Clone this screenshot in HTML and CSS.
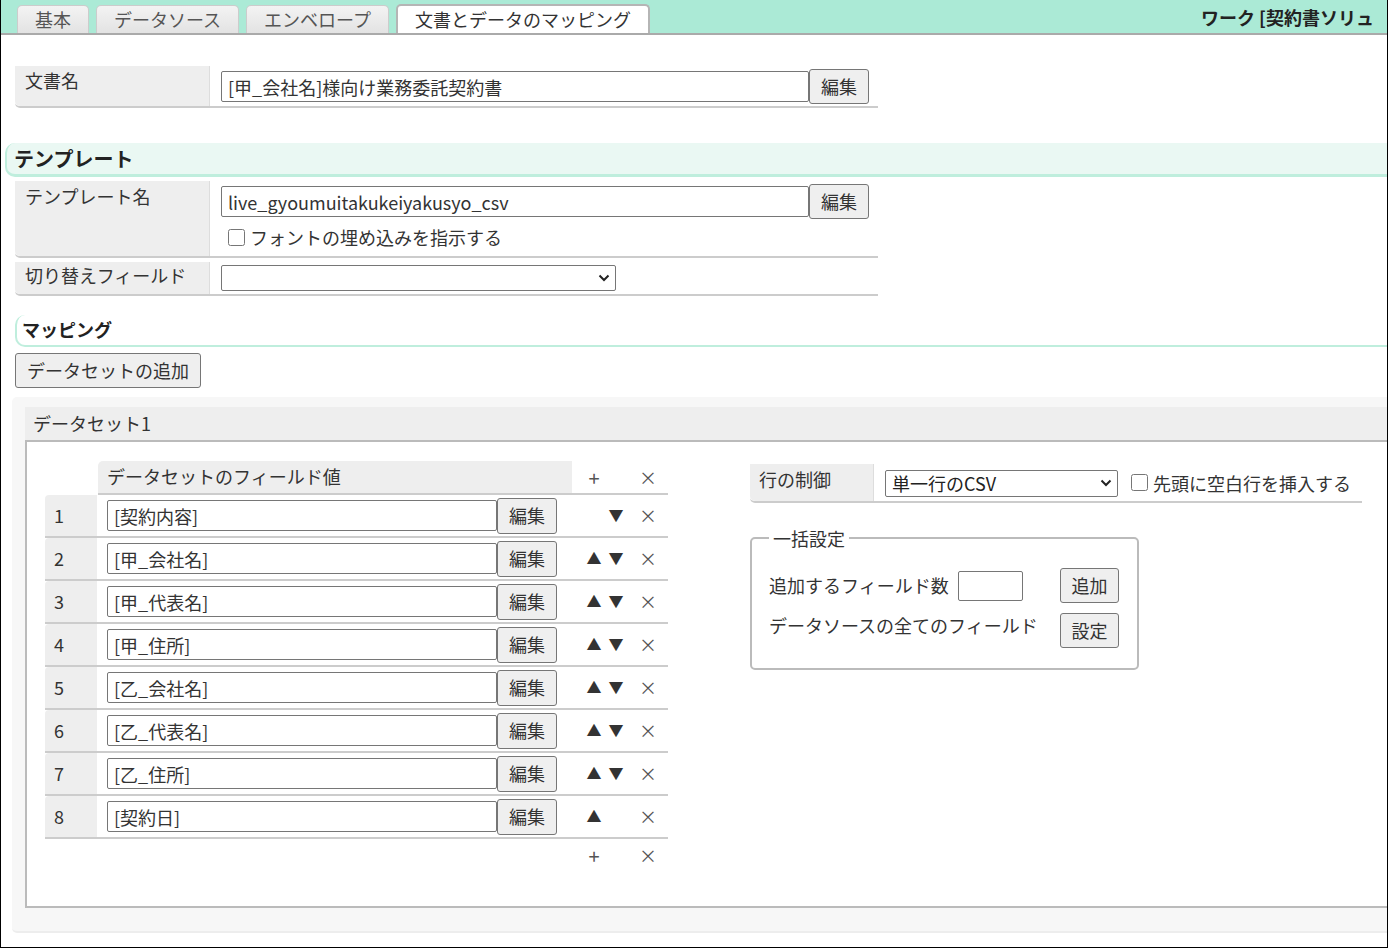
FILE: index.html
```html
<!DOCTYPE html>
<html>
<head>
	<meta charset="utf-8">
	<title>文書とデータのマッピング</title>
	<link rel="stylesheet" href="styles.css">
</head>
<body>
<div class="frame">
   <div class="tabbar">
      <div class="tab">基本</div>
      <div class="tab">データソース</div>
      <div class="tab">エンベロープ</div>
      <div class="tab active">文書とデータのマッピング</div>
      <div class="work-title">ワーク [契約書ソリュ</div>
   </div>

   <div class="main">
      <div class="prop doc-row">
         <div class="prop-label">文書名</div>
         <div class="prop-value">
            <div class="field-line">
               <input class="text-long" type="text" value="[甲_会社名]様向け業務委託契約書"><button class="btn">編集</button>
            </div>
         </div>
      </div>

      <h2 class="section-head template-head">テンプレート</h2>

      <div class="prop tpl-row">
         <div class="prop-label">テンプレート名</div>
         <div class="prop-value">
            <div class="field-line">
               <input class="text-long" type="text" value="live_gyoumuitakukeiyakusyo_csv"><button class="btn">編集</button>
            </div>
            <label class="check-line"><input type="checkbox">フォントの埋め込みを指示する</label>
         </div>
      </div>

      <div class="prop switch-row">
         <div class="prop-label">切り替えフィールド</div>
         <div class="prop-value">
            <span class="select-wrap">
               <select class="switch-select"><option></option></select>
               <svg class="chev" width="12" height="8" viewBox="0 0 12 8"><path d="M1.5 1.5 L6 6 L10.5 1.5" fill="none" stroke="#222" stroke-width="2"/></svg>
            </span>
         </div>
      </div>

      <h3 class="section-head mapping-head">マッピング</h3>
      <button class="btn add-dataset">データセットの追加</button>

      <div class="dataset-panel">
         <div class="dataset-title">データセット1</div>
         <div class="dataset-body">

            <div class="fields">
               <div class="fhead">
                  <div class="fhead-cell">データセットのフィールド値</div>
                  <span class="ic plus">+</span>
                  <span class="ic del">×</span>
               </div>

               <div class="frow">
                  <div class="num">1</div>
                  <div class="fval"><input class="text-field" type="text" value="[契約内容]"><button class="btn">編集</button></div>
                  <span class="ic up blank">▲</span><span class="ic down">▼</span><span class="ic del">×</span>
               </div>
               <div class="frow">
                  <div class="num">2</div>
                  <div class="fval"><input class="text-field" type="text" value="[甲_会社名]"><button class="btn">編集</button></div>
                  <span class="ic up">▲</span><span class="ic down">▼</span><span class="ic del">×</span>
               </div>
               <div class="frow">
                  <div class="num">3</div>
                  <div class="fval"><input class="text-field" type="text" value="[甲_代表名]"><button class="btn">編集</button></div>
                  <span class="ic up">▲</span><span class="ic down">▼</span><span class="ic del">×</span>
               </div>
               <div class="frow">
                  <div class="num">4</div>
                  <div class="fval"><input class="text-field" type="text" value="[甲_住所]"><button class="btn">編集</button></div>
                  <span class="ic up">▲</span><span class="ic down">▼</span><span class="ic del">×</span>
               </div>
               <div class="frow">
                  <div class="num">5</div>
                  <div class="fval"><input class="text-field" type="text" value="[乙_会社名]"><button class="btn">編集</button></div>
                  <span class="ic up">▲</span><span class="ic down">▼</span><span class="ic del">×</span>
               </div>
               <div class="frow">
                  <div class="num">6</div>
                  <div class="fval"><input class="text-field" type="text" value="[乙_代表名]"><button class="btn">編集</button></div>
                  <span class="ic up">▲</span><span class="ic down">▼</span><span class="ic del">×</span>
               </div>
               <div class="frow">
                  <div class="num">7</div>
                  <div class="fval"><input class="text-field" type="text" value="[乙_住所]"><button class="btn">編集</button></div>
                  <span class="ic up">▲</span><span class="ic down">▼</span><span class="ic del">×</span>
               </div>
               <div class="frow">
                  <div class="num">8</div>
                  <div class="fval"><input class="text-field" type="text" value="[契約日]"><button class="btn">編集</button></div>
                  <span class="ic up">▲</span><span class="ic down blank">▼</span><span class="ic del">×</span>
               </div>

               <div class="ffoot">
                  <span class="ic plus">+</span>
                  <span class="ic del">×</span>
               </div>
            </div>

            <div class="side">
               <div class="prop rowctl">
                  <div class="prop-label">行の制御</div>
                  <div class="prop-value">
                     <span class="select-wrap">
                        <select class="rowctl-select"><option>単一行のCSV</option></select>
                        <svg class="chev" width="12" height="8" viewBox="0 0 12 8"><path d="M1.5 1.5 L6 6 L10.5 1.5" fill="none" stroke="#222" stroke-width="2"/></svg>
                     </span>
                     <label class="check-inline"><input type="checkbox">先頭に空白行を挿入する</label>
                  </div>
               </div>

               <fieldset class="bulk">
                  <legend>一括設定</legend>
                  <div class="bulk-grid">
                     <div class="bulk-text">追加するフィールド数<input class="count" type="text"></div>
                     <button class="btn">追加</button>
                     <div class="bulk-text all">データソースの全てのフィールド</div>
                     <button class="btn">設定</button>
                  </div>
               </fieldset>
            </div>

         </div>
      </div>
   </div>
</div>
</body>
</html>
```

FILE: styles.css
```css
body{
	margin: 0;
	font-family: "Noto Sans CJK JP", "Noto Sans", sans-serif;
	font-size: 18px;
	line-height: 1.35;
	color: #333;
	background: #fff;
}
.frame{
	width: 1388px;
	height: 948px;
	box-sizing: border-box;
	border: 1px solid #000;
	border-top: none;
	overflow: hidden;
}

/* tabs */
.tabbar{
	height: 33px;
	background: #abead6;
	border-bottom: 2px solid #aaa;
	display: flex;
	align-items: flex-end;
	gap: 7px;
	padding-left: 16px;
	white-space: nowrap;
	overflow: hidden;
}
.tab{
	height: 27px;
	line-height: 26px;
	padding: 0 17px;
	border: 1px solid #ccc;
	border-bottom: none;
	border-radius: 5px 5px 0 0;
	background: linear-gradient(#f3f3f3, #e3e3e3);
	color: #555;
}
.tab.active{
	height: 29px;
	line-height: 26px;
	margin-bottom: -2px;
	border: 2px solid #b5b5b5;
	border-bottom: none;
	background: #fff;
	color: #333;
}
.work-title{
	margin-left: 544px;
	align-self: center;
	padding-top: 2px;
	font-weight: bold;
	color: #222;
}

/* main form */
.main{
	padding: 31px 0 0 14px;
}
.prop{
	display: flex;
	width: 863px;
	border-bottom: 2px solid #ccc;
	border-radius: 0 0 0 5px;
}
.prop-label{
	width: 195px;
	box-sizing: border-box;
	padding: 2px 6px 0 10px;
	background: #eee;
	border-right: 1px solid #ddd;
	border-radius: 0 0 0 5px;
}
.prop-value{
	padding: 3px 0 2px 11px;
}
.field-line{
	display: flex;
	align-items: center;
}
.text-long{
	width: 588px;
	height: 31px;
	box-sizing: border-box;
	border: 1px solid #767676;
	border-radius: 2px;
	padding: 0 6px;
	font: inherit;
	color: #333;
}
.btn{
	height: 35px;
	padding: 0 11px;
	font: inherit;
	color: #333;
	background: #efefef;
	border: 1px solid #767676;
	border-radius: 3px;
}
.check-line{
	display: flex;
	align-items: center;
	height: 26px;
	margin: 5px 0 4px;
}
.check-line input,
.check-inline input{
	width: 17px;
	height: 17px;
	margin: 0 5px 0 7px;
}

.select-wrap{
	display: inline-flex;
	align-items: center;
}
.select-wrap select{
	appearance: none;
	-webkit-appearance: none;
	padding: 0 26px 0 6px;
}
.chev{
	margin-left: -18px;
	pointer-events: none;
}

.section-head{
	margin: 0;
	font-weight: bold;
	color: #222;
}
.template-head{
	margin: 35px 0 4px -10px;
	height: 31px;
	line-height: 31px;
	padding-left: 7px;
	font-size: 20px;
	background: #eaf8f3;
	border-left: 2px solid #bfeedd;
	border-bottom: 3px solid #bfeedd;
	border-radius: 10px 0 0 10px;
}
.tpl-row .prop-label{
	padding-top: 3px;
}
.switch-row{
	margin-top: 4px;
}
.switch-row .prop-label{
	padding-top: 1px;
}
.switch-row .prop-value{
	padding: 3px 0 3px 11px;
}
.switch-select{
	width: 395px;
	height: 26px;
	font: inherit;
	border: 1px solid #767676;
	border-radius: 2px;
	background: #fff;
}

.mapping-head{
	margin-top: 19px;
	height: 28px;
	line-height: 28px;
	padding: 0 0 2px 5px;
	font-size: 18px;
	border-left: 2px solid #bfeedd;
	border-bottom: 2px solid #bfeedd;
	border-radius: 10px 0 0 10px;
}
.add-dataset{
	display: block;
	margin-top: 6px;
}

/* dataset panel */
.dataset-panel{
	margin: 9px 0 0 -3px;
	padding: 10px 0 23px 13px;
	background: #f7f7f7;
	border-bottom: 2px solid #ededed;
	border-radius: 5px 0 0 5px;
}
.dataset-title{
	height: 33px;
	line-height: 33px;
	padding-left: 8px;
	background: #eee;
	border-bottom: 2px solid #bbb;
}
.dataset-body{
	height: 466px;
	box-sizing: border-box;
	display: flex;
	align-items: flex-start;
	padding: 19px 0 0 18px;
	background: #fff;
	border-left: 2px solid #bbb;
	border-bottom: 2px solid #bbb;
}

.fields{
	width: 623px;
}
.fhead{
	display: flex;
	align-items: center;
	height: 32px;
	margin-left: 53px;
	border-bottom: 2px solid #ccc;
}
.fhead-cell{
	width: 474px;
	height: 32px;
	line-height: 30px;
	box-sizing: border-box;
	padding-left: 9px;
	background: #eee;
	border-radius: 5px 0 0 0;
}
.ic{
	display: inline-block;
	width: 22px;
	text-align: center;
	color: #333;
}
.fhead .plus{ margin-left: 11px; }
.fhead .del{ margin-left: 32px; }
.plus{
	color: #555;
	font-size: 20px;
}
.del{
	color: #555;
	font-size: 18px;
}

.frow{
	display: flex;
	align-items: center;
	height: 41px;
	border-bottom: 2px solid #ccc;
}
.num{
	width: 52px;
	align-self: stretch;
	box-sizing: border-box;
	padding-left: 9px;
	line-height: 41px;
	background: #eee;
	border-radius: 4px 0 0 0;
}
.fval{
	display: flex;
	align-items: center;
	padding-left: 10px;
}
.text-field{
	width: 390px;
	height: 31px;
	box-sizing: border-box;
	border: 1px solid #767676;
	border-radius: 2px;
	padding: 0 6px;
	font: inherit;
	color: #333;
}
.frow .btn{
	width: 60px;
	height: 36px;
	padding: 0;
}
.up, .down{
	font-size: 15px;
}
.frow .up{ margin-left: 26px; }
.frow .del{ margin-left: 10px; }
.blank{ visibility: hidden; }

.ffoot{
	display: flex;
	align-items: center;
	height: 32px;
	padding-left: 538px;
}
.ffoot .del{ margin-left: 32px; }

/* right side */
.side{
	margin-left: 82px;
	padding-top: 3px;
}
.rowctl{
	width: 612px;
}
.rowctl .prop-label{
	width: 124px;
	padding-left: 9px;
	padding-top: 3px;
}
.rowctl .prop-value{
	display: flex;
	align-items: center;
	height: 36px;
	padding: 1px 0 0 11px;
}
.rowctl-select{
	width: 233px;
	height: 27px;
	font: inherit;
	border: 1px solid #767676;
	border-radius: 2px;
	background: #fff;
	color: #222;
}
.check-inline{
	display: flex;
	align-items: center;
	margin-left: 13px;
}
.check-inline input{
	margin: 0 5px 0 6px;
}

.bulk{
	width: 389px;
	box-sizing: border-box;
	margin: 24px 0 0;
	padding: 19px 17px 20px;
	border: 2px solid #bbb;
	border-radius: 5px;
}
.bulk legend{
	padding: 0 4px;
	line-height: 22px;
}
.bulk-grid{
	display: grid;
	grid-template-columns: 291px 59px;
	row-gap: 10px;
	align-items: center;
}
.bulk-text{
	display: flex;
	align-items: center;
}
.bulk-text.all{
	align-self: start;
	margin-top: 0;
}
.count{
	width: 65px;
	height: 30px;
	box-sizing: border-box;
	margin-left: 9px;
	border: 1px solid #767676;
	border-radius: 2px;
	font: inherit;
}
.bulk .btn{
	width: 59px;
	padding: 0;
}
```
